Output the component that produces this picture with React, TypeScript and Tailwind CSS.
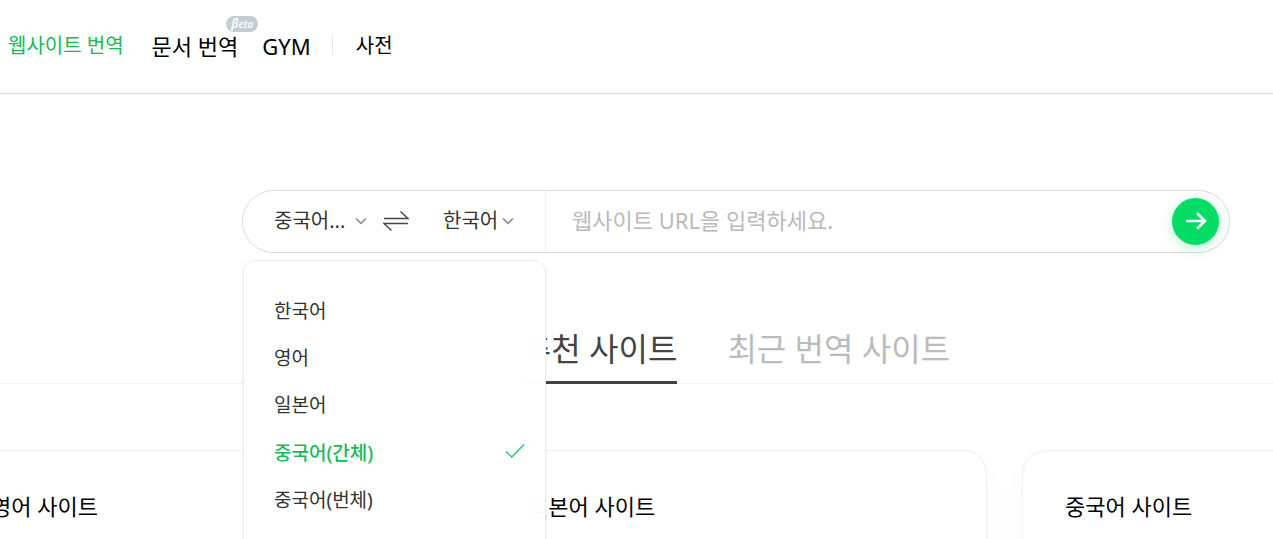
import { useState } from "react";

const languages = ["한국어", "영어", "일본어", "중국어(간체)", "중국어(번체)"];
const sites = ["영어 사이트", "일본어 사이트", "중국어 사이트"];

function Chevron() {
  return (
    <svg viewBox="0 0 12 8" className="h-2 w-3 shrink-0" fill="none" stroke="#8f8f8f" strokeWidth="1.7" aria-hidden="true">
      <path d="M1 1.5 6 6.3 11 1.5" />
    </svg>
  );
}

function Header() {
  return (
    <header className="border-b border-[#d9dbdc]">
      <nav className="flex h-[93px] items-center whitespace-nowrap pb-0.5 pl-2 text-[20px] leading-7 text-black">
        <a href="#website" className="text-[#19b955]">웹사이트 번역</a>
        <a href="#document" className="relative ml-7 text-[22px]">
          문서 번역
          <span className="absolute -right-5 -top-4 flex h-4 w-8 items-center justify-center rounded-full bg-[#c3ced4] font-['Open_Sans','Noto_Sans',sans-serif] text-[10px] font-semibold italic leading-4 text-white">
            <span className="text-[12px]">β</span>eta
          </span>
        </a>
        <a href="#gym" className="ml-6 text-[22px]">GYM</a>
        <span className="ml-[21px] h-[19px] w-px bg-[#e3e5e6]" />
        <a href="#dictionary" className="ml-[23px]">사전</a>
      </nav>
    </header>
  );
}

function LanguageMenu({ selected, onSelect }: { selected: string; onSelect: (l: string) => void }) {
  return (
    <ul
      role="listbox"
      aria-label="원본 언어"
      className="absolute left-0 top-[69px] z-10 w-[303px] rounded-xl border border-[#ebeced] bg-white/99 pb-8 pt-[27px] shadow-[0_1px_3px_rgba(0,0,0,0.06)]"
    >
      {languages.map((l) => (
        <li key={l} role="option" aria-selected={l === selected}>
          <button
            type="button"
            onClick={() => onSelect(l)}
            className={
              l === selected
                ? "flex h-12 w-full items-center justify-between pl-[30px] pr-5 text-[19px] font-medium text-[#19b955]"
                : "flex h-[47px] w-full items-center justify-between pl-[30px] pr-5 text-[19px] text-[#333]"
            }
          >
            {l}
            {l === selected && (
              <svg viewBox="0 0 20 16" className="mb-1 h-4 w-5" fill="none" stroke="#12cf66" strokeWidth="1.3" aria-hidden="true">
                <path d="M1 8.5 6.8 14 19 1.5" />
              </svg>
            )}
          </button>
        </li>
      ))}
    </ul>
  );
}

function SearchBar() {
  const [source, setSource] = useState("중국어(간체)");
  const [open, setOpen] = useState(true);
  return (
    <form
      onSubmit={(e) => e.preventDefault()}
      className="relative mx-[43px] mt-24 flex h-[63px] items-stretch rounded-full border border-[#d9dbdc] bg-white"
    >
      <div className="flex w-[303px] shrink-0 items-center border-r border-[#eff0f1] pb-0.5 pl-[31px] text-[20px] text-[#333]">
        <button
          type="button"
          aria-haspopup="listbox"
          aria-expanded={open}
          onClick={() => setOpen(!open)}
          className="flex w-[93px] items-center justify-between whitespace-nowrap"
        >
          {source.length > 3 ? source.slice(0, 3) + "..." : source}
          <Chevron />
        </button>
        <button type="button" aria-label="언어 바꾸기" className="ml-4">
          <svg viewBox="0 0 26 22" className="h-[22px] w-[26px]" fill="none" stroke="#444" strokeWidth="1.4" aria-hidden="true">
            <path d="M1 8.5H25L17.5 1.5M25 13.5H1L8.5 20.5" />
          </svg>
        </button>
        <button type="button" aria-haspopup="listbox" className="ml-[34px] flex items-center gap-1 whitespace-nowrap">
          한국어
          <Chevron />
        </button>
      </div>
      <input
        type="text"
        aria-label="웹사이트 URL"
        placeholder="웹사이트 URL을 입력하세요."
        className="min-w-0 flex-1 bg-transparent pb-0.5 pl-[26px] text-[22px] text-[#333] outline-none placeholder:text-[#b9b9b9]"
      />
      <button
        type="submit"
        aria-label="번역하기"
        className="mr-2.5 flex size-[47px] shrink-0 items-center justify-center self-center rounded-full bg-[#03dd65] pb-0.5 shadow-[0_4px_14px_rgba(3,221,101,0.25)]"
      >
        <svg viewBox="0 0 22 18" className="h-[18px] w-[22px]" fill="none" stroke="#fff" strokeWidth="2.6" aria-hidden="true">
          <path d="M1 9H20M12 1.2 20 9 12 16.8" />
        </svg>
      </button>
      {open && (
        <LanguageMenu
          selected={source}
          onSelect={(l) => {
            setSource(l);
            setOpen(false);
          }}
        />
      )}
    </form>
  );
}

export default function App() {
  return (
    <div className="min-h-screen overflow-x-hidden bg-white font-['Noto_Sans','Noto_Sans_CJK_KR',sans-serif]">
      <Header />
      <main>
        <div className="pl-[199px]">
          <SearchBar />
        </div>
        <div className="mt-[67px] flex justify-center gap-[50px] whitespace-nowrap border-b border-[#f0f1f1] pl-[199px] text-[32px] leading-[58px]">
          <button type="button" className="-mb-px h-16 border-b-3 border-[#444] pb-1 text-[#444]">
            추천 사이트
          </button>
          <button type="button" className="-mb-px h-16 border-b-3 border-transparent pb-1 text-[#bbb]">
            최근 번역 사이트
          </button>
        </div>
        <div className="mt-[66px] flex justify-center gap-[35px] pl-[199px]">
          {sites.map((s) => (
            <section
              key={s}
              className="h-[420px] w-[502px] shrink-0 rounded-3xl border border-[#eeefef] bg-white pl-[42px] pt-[39px] shadow-[0_12px_24px_rgba(60,80,110,0.04)]"
            >
              <h2 className="whitespace-nowrap text-[22px] leading-8 text-black">{s}</h2>
            </section>
          ))}
        </div>
      </main>
    </div>
  );
}
